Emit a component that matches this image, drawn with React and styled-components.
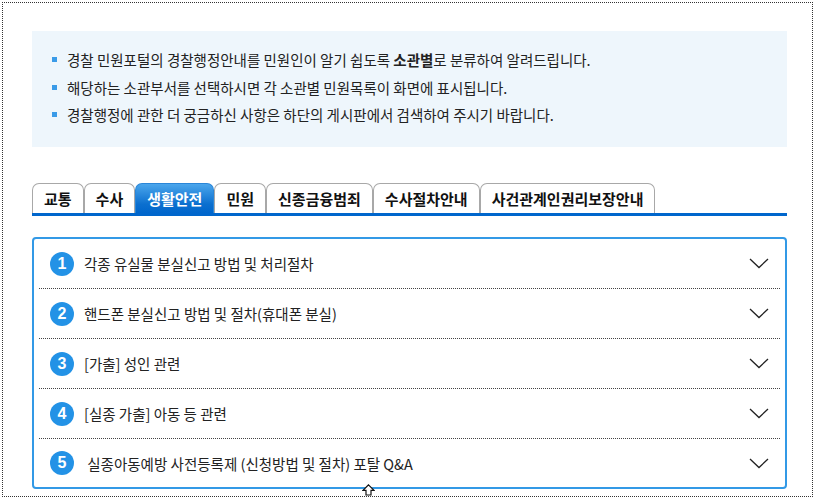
import React from "react";
import styled, { createGlobalStyle } from "styled-components";

const GlobalStyle = createGlobalStyle`
  html, body {
    margin: 0;
    padding: 0;
    background: #fff;
  }
  body {
    font-family: "Noto Sans CJK KR", "Noto Sans", sans-serif;
    color: #222;
  }
`;

const notices = [
  [
    "경찰 민원포털의 경찰행정안내를 민원인이 알기 쉽도록 ",
    <b key="b">소관별</b>,
    "로 분류하여 알려드립니다.",
  ],
  ["해당하는 소관부서를 선택하시면 각 소관별 민원목록이 화면에 표시됩니다."],
  ["경찰행정에 관한 더 궁금하신 사항은 하단의 게시판에서 검색하여 주시기 바랍니다."],
];

const tabs = [
  "교통",
  "수사",
  "생활안전",
  "민원",
  "신종금융범죄",
  "수사절차안내",
  "사건관계인권리보장안내",
];

const items = [
  "각종 유실물 분실신고 방법 및 처리절차",
  "핸드폰 분실신고 방법 및 절차(휴대폰 분실)",
  "[가출] 성인 관련",
  "[실종 가출] 아동 등 관련",
  " 실종아동예방 사전등록제 (신청방법 및 절차) 포탈 Q&A",
];

const Chevron = () => (
  <svg width="20" height="11" viewBox="0 0 20 11">
    <path d="M1 1 L10 9.5 L19 1" fill="none" stroke="#222" strokeWidth="1.3" />
  </svg>
);

export default function App() {
  return (
    <>
      <GlobalStyle />
      <Frame>
        <InfoBox>
          {notices.map((n, i) => (
            <Notice key={i}>{n}</Notice>
          ))}
        </InfoBox>

        <TabBar>
          {tabs.map((t) => (
            <Tab key={t} $active={t === "생활안전"}>
              {t}
            </Tab>
          ))}
        </TabBar>

        <Accordion>
          {items.map((text, i) => (
            <Row key={i} $last={i === items.length - 1}>
              <Num>{i + 1}</Num>
              <Title>{text}</Title>
              <Chevron />
            </Row>
          ))}
          <Cursor width="13" height="12" viewBox="0 0 13 12">
            <path
              d="M6.5 0.8 L12 6.3 L9 6.3 L9 11 L4 11 L4 6.3 L1 6.3 Z"
              fill="#fff"
              stroke="#111"
              strokeWidth="1.2"
            />
          </Cursor>
        </Accordion>
      </Frame>
    </>
  );
}

const Frame = styled.div`
  box-sizing: border-box;
  margin: 2px;
  width: 811px;
  height: 495px;
  border: 1px dotted #333;
  padding: 28px 25px 0 29px;
`;

const InfoBox = styled.ul`
  list-style: none;
  margin: 0;
  width: 755px;
  box-sizing: border-box;
  background: #eef6fc;
  padding: 15px 20px 18px 20px;
  height: 116px;
`;

const Notice = styled.li`
  position: relative;
  padding-left: 15px;
  font-size: 14.5px;
  line-height: 27.5px;
  height: 27.5px;
  color: #222;
  &::before {
    content: "";
    position: absolute;
    left: 0;
    top: 11px;
    width: 5px;
    height: 5px;
    background: #3a9be8;
  }
  b {
    font-weight: 700;
  }
`;

const TabBar = styled.div`
  display: flex;
  align-items: flex-end;
  margin-top: 36px;
  width: 755px;
  border-bottom: 3px solid #0066cc;
`;

const Tab = styled.div`
  box-sizing: border-box;
  height: 30px;
  padding: 0 11px;
  display: flex;
  align-items: center;
  font-size: 15px;
  font-weight: 700;
  color: ${(p) => (p.$active ? "#fff" : "#111")};
  background: ${(p) =>
    p.$active ? "linear-gradient(#4ba6ec, #0b6fcf 70%, #0066cc)" : "#fff"};
  border: 1px solid ${(p) => (p.$active ? "#2a86d8" : "#a8a8a8")};
  border-bottom: none;
  border-radius: 7px 7px 0 0;
`;

const Accordion = styled.div`
  position: relative;
  margin-top: 21px;
  width: 755px;
  box-sizing: border-box;
  border: 2px solid #3299e6;
  border-radius: 4px;
  padding: 0 5px;
`;

const Row = styled.div`
  height: ${(p) => (p.$last ? "48px" : "49px")};
  display: flex;
  align-items: center;
  padding: 0 11px;
  border-bottom: ${(p) => (p.$last ? "none" : "1px dotted #444")};
`;

const Num = styled.span`
  flex: none;
  width: 24px;
  height: 24px;
  border-radius: 50%;
  background: #2392e6;
  color: #fff;
  font-family: "Liberation Sans", Arial, sans-serif;
  font-weight: 700;
  font-size: 16px;
  display: flex;
  align-items: center;
  justify-content: center;
  margin-right: 10px;
`;

const Title = styled.span`
  flex: 1;
  font-size: 14.5px;
  white-space: pre;
  color: #222;
`;

const Cursor = styled.svg`
  position: absolute;
  left: 328px;
  bottom: -9px;
`;
